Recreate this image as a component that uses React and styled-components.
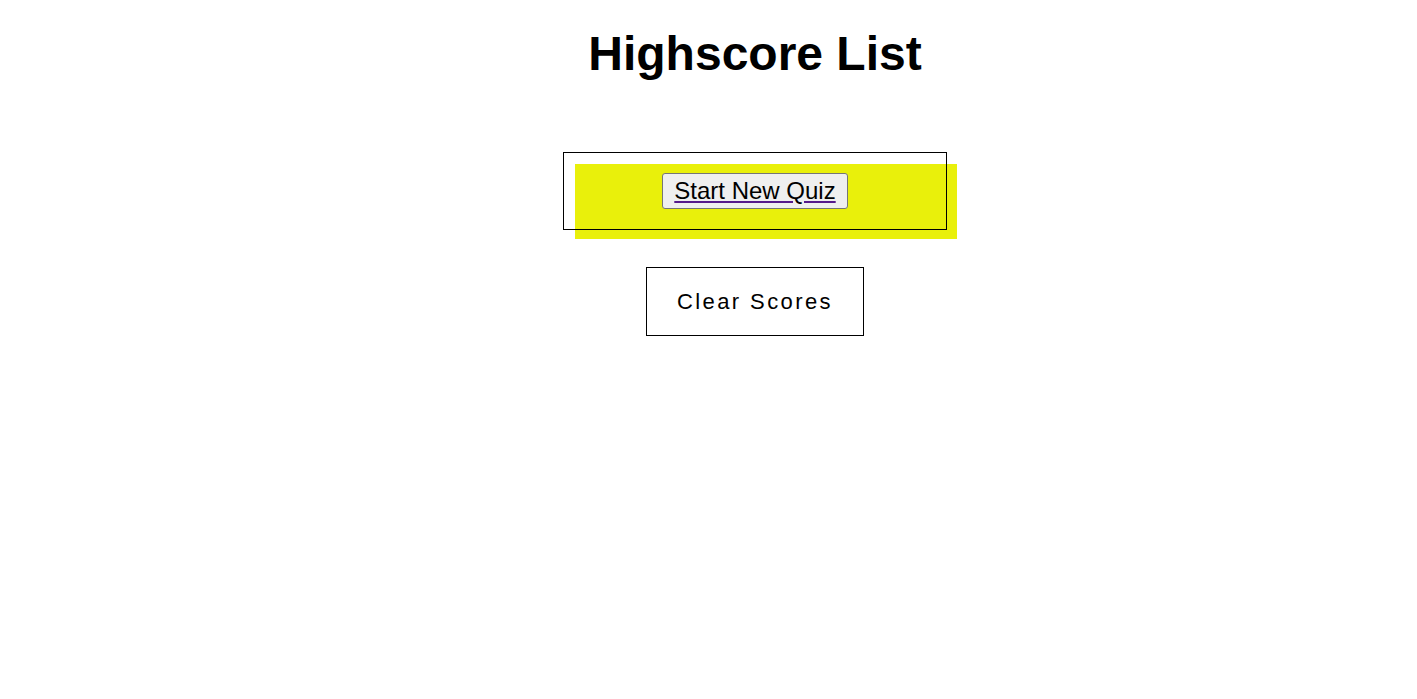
import React from "react";
import styled, { createGlobalStyle } from "styled-components";

const Global = createGlobalStyle`
  body {
    margin: 0;
    background: #fff;
    font-family: "Liberation Sans", Arial, sans-serif;
    color: #000;
  }
`;

const Page = styled.main`
  display: flex;
  flex-direction: column;
  align-items: center;
  padding-left: 93px;
  padding-top: 26px;
`;

const Title = styled.h1`
  margin: 0;
  font-size: 48px;
  line-height: 55px;
  font-weight: bold;
`;

// yellow card, the thin outline frame sits offset up-left on top of it
const QuizBox = styled.div`
  position: relative;
  margin-top: 83px;
  margin-left: 22px;
  width: 382px;
  height: 75px;
  display: flex;
  justify-content: center;
  align-items: flex-start;
  padding-top: 9px;
  box-sizing: border-box;
  background: #e9f00b;

  &::before {
    content: "";
    position: absolute;
    left: -12px;
    top: -12px;
    width: 384px;
    height: 78px;
    box-sizing: border-box;
    border: 1px solid #000;
    pointer-events: none;
  }
`;

const QuizButton = styled.button`
  margin-right: 22px;
  font-family: "Liberation Sans", Arial, sans-serif;
  font-size: 24px;
  line-height: 28px;
  padding: 3px 11px;
  background: #efefef;
  border: 1px solid #767676;
  border-radius: 3px;
  color: #000;
  cursor: pointer;

  a {
    color: #000;
    text-decoration: underline;
    text-decoration-color: #551a8b;
  }
`;

const ClearButton = styled.button`
  margin-top: 28px;
  width: 218px;
  height: 69px;
  background: #fff;
  border: 1px solid #000;
  font-family: "Liberation Sans", Arial, sans-serif;
  font-size: 22px;
  letter-spacing: 2.4px;
  color: #000;
  cursor: pointer;
`;

export default function App() {
  return (
    <>
      <Global />
      <Page>
        <Title>Highscore List</Title>
        <QuizBox>
          <QuizButton>
            <a href="#">Start New Quiz</a>
          </QuizButton>
        </QuizBox>
        <ClearButton>Clear Scores</ClearButton>
      </Page>
    </>
  );
}
